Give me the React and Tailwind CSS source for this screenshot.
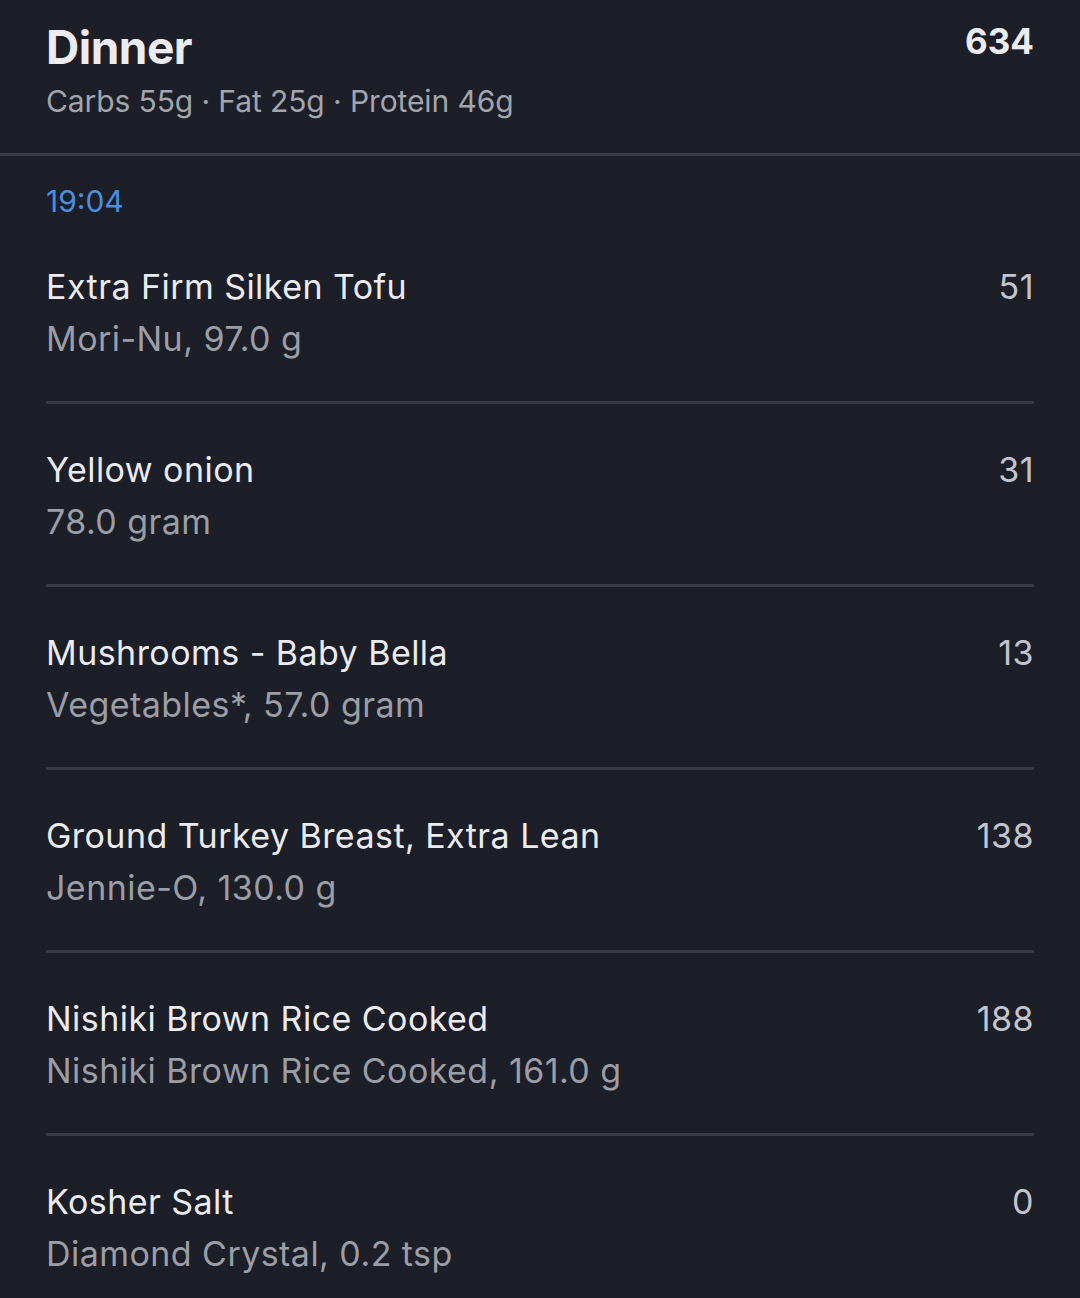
import React from 'react';

const items = [
  { name: 'Extra Firm Silken Tofu', detail: 'Mori-Nu, 97.0 g', kcal: 51 },
  { name: 'Yellow onion', detail: '78.0 gram', kcal: 31 },
  { name: 'Mushrooms - Baby Bella', detail: 'Vegetables*, 57.0 gram', kcal: 13 },
  { name: 'Ground Turkey Breast, Extra Lean', detail: 'Jennie-O, 130.0 g', kcal: 138 },
  { name: 'Nishiki Brown Rice Cooked', detail: 'Nishiki Brown Rice Cooked, 161.0 g', kcal: 188 },
  { name: 'Kosher Salt', detail: 'Diamond Crystal, 0.2 tsp', kcal: 0 },
];

function FoodRow({ item, last }) {
  return (
    <div className={last ? 'pt-[40px] pb-[20px]' : 'pt-[40px] pb-[36px] border-b-[3px] border-[#383a45]'}>
      <div className="flex justify-between items-start">
        <div className="min-w-0">
          <div className="text-[34px] leading-[52px] tracking-[0.45px] text-[#ececf0]">{item.name}</div>
          <div className="text-[34px] leading-[52px] tracking-[0.45px] text-[#9c9ea6]">{item.detail}</div>
        </div>
        <div className="text-[34px] leading-[52px] tracking-[0.45px] text-[#c4c5cc]">{item.kcal}</div>
      </div>
    </div>
  );
}

export default function App() {
  return (
    <div
      className="w-[1080px] h-[1298px] overflow-hidden bg-[#1c1e28]"
      style={{ fontFamily: 'Inter, "Noto Sans", sans-serif' }}
    >
      {/* header */}
      <div className="px-[46px] pt-[19px] pb-[32px] flex justify-between items-start">
        <div>
          <div className="text-[46px] leading-[56px] font-bold text-[#ececf0] tracking-[-0.5px]">Dinner</div>
          <div className="mt-[6px] text-[30px] leading-[40px] tracking-[-0.1px] text-[#a3a5ad]">
            Carbs 55g · Fat 25g · Protein 46g
          </div>
        </div>
        <div className="text-[35px] leading-[44px] font-bold text-[#ececf0]">634</div>
      </div>
      <div className="h-[3px] bg-[#3d3f4a]" />

      <div className="px-[46px]">
        <div className="pt-[25px] text-[30px] leading-[40px] text-[#4a90e2]">19:04</div>
        <div>
          {items.map((item, i) => (
            <FoodRow key={item.name} item={item} last={i === items.length - 1} />
          ))}
        </div>
      </div>
    </div>
  );
}
